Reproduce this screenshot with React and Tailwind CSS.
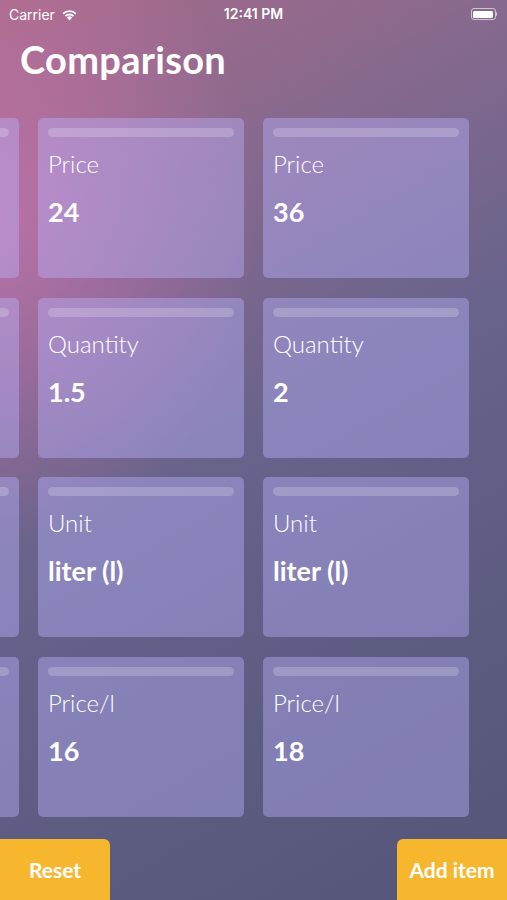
import React from "react";

const columns = [
  [
    { label: "", value: "" },
    { label: "", value: "" },
    { label: "", value: "" },
    { label: "", value: "" },
  ],
  [
    { label: "Price", value: "24" },
    { label: "Quantity", value: "1.5" },
    { label: "Unit", value: "liter (l)" },
    { label: "Price/l", value: "16" },
  ],
  [
    { label: "Price", value: "36" },
    { label: "Quantity", value: "2" },
    { label: "Unit", value: "liter (l)" },
    { label: "Price/l", value: "18" },
  ],
];

function Wifi() {
  return (
    <svg width="17" height="13" viewBox="0 0 16 12" fill="white">
      <path d="M8 11.6 L5.5 8.9 A3.5 3.5 0 0 1 10.5 8.9 Z" />
      <path d="M3.6 6.9 A6.3 6.3 0 0 1 12.4 6.9 L11.2 8.2 A4.6 4.6 0 0 0 4.8 8.2 Z" />
      <path d="M1.4 4.7 A9.4 9.4 0 0 1 14.6 4.7 L13.4 6 A7.6 7.6 0 0 0 2.6 6 Z" />
    </svg>
  );
}

function Battery() {
  return (
    <div className="flex items-center">
      <div className="w-[25px] h-[12px] rounded-[3px] border border-white/60 p-[1.5px]">
        <div className="w-full h-full bg-white rounded-[1.5px]" />
      </div>
      <div className="w-[1.5px] h-[4px] bg-white/60 rounded-r-sm" />
    </div>
  );
}

function Card({ label, value }) {
  return (
    <div className="w-[206px] h-[160px] shrink-0 rounded-[5px] bg-[rgba(185,178,255,0.42)] pt-[10px] px-[10px]">
      <div className="h-[9px] rounded-full bg-white/20" />
      <div className="mt-[12px] h-[29px] text-[24px] leading-[29px] font-light text-white whitespace-nowrap" style={{ fontFamily: "Lato, sans-serif" }}>
        {label}
      </div>
      <div className="mt-[18px] h-[32px] text-[27px] leading-[32px] font-bold text-white whitespace-nowrap" style={{ fontFamily: "Lato, sans-serif" }}>
        {value}
      </div>
    </div>
  );
}

export default function App() {
  return (
    <div
      className="relative w-[507px] h-[900px] overflow-hidden text-white bg-[linear-gradient(150deg,#a86b89_0%,#86698e_25%,#67638b_50%,#5c5b80_75%,#55557a_100%)]"
      style={{ fontFamily: "Lato, sans-serif" }}
    >
      <div className="absolute inset-0 bg-[radial-gradient(ellipse_260px_320px_at_0px_220px,rgba(225,120,190,0.5),rgba(225,120,190,0)_100%)] pointer-events-none" />
      <div className="relative flex flex-col h-full">
        {/* status bar */}
        <div className="h-[28px] relative flex items-center px-[9px] text-[14px]" style={{ fontFamily: "Inter, 'Liberation Sans', sans-serif" }}>
          <div className="flex items-center gap-[6px]">
            <span className="font-normal">Carrier</span>
            <Wifi />
          </div>
          <div className="absolute left-0 right-0 text-center font-semibold top-[6px] leading-[16px]">12:41 PM</div>
          <div className="ml-auto mr-[1px]">
            <Battery />
          </div>
        </div>

        <div className="mt-[9px] px-[20px] text-[38px] leading-[45px] font-bold tracking-[0.3px]">Comparison</div>

        <div className="mt-[36px] flex gap-[19px] -ml-[187px]">
          {columns.map((col, i) => (
            <div key={i} className="flex flex-col gap-[19.6px]">
              {col.map((c, j) => (
                <Card key={j} {...c} />
              ))}
            </div>
          ))}
        </div>

        <div className="mt-auto flex justify-between">
          <button className="w-[110px] h-[61px] bg-[#f6b62d] rounded-tr-[6px] text-[21px] font-bold text-white">Reset</button>
          <button className="w-[110px] h-[61px] bg-[#f6b62d] rounded-tl-[6px] text-[21px] font-bold text-white">Add item</button>
        </div>
      </div>
    </div>
  );
}
